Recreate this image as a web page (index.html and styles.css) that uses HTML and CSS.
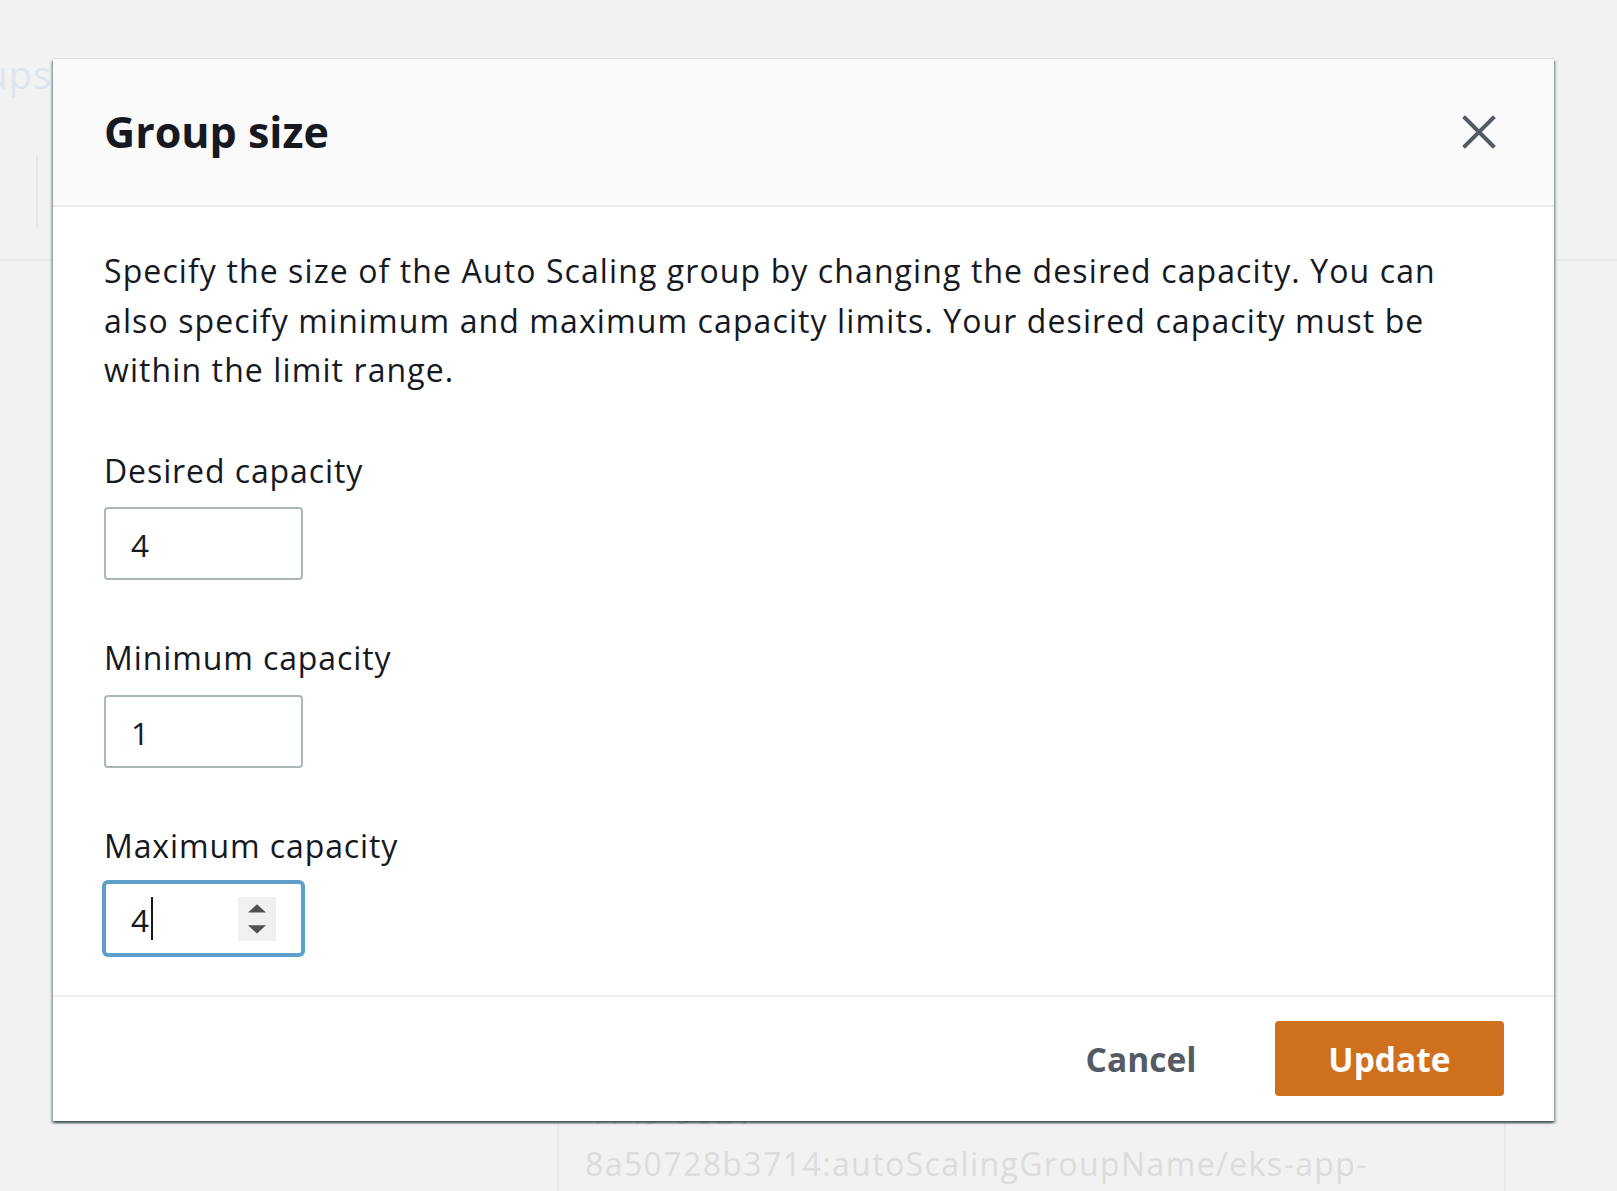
FILE: index.html
```html
<!DOCTYPE html>
<html lang="en">
<head>
<meta charset="utf-8">
<title>Group size</title>
<link rel="stylesheet" href="styles.css">
</head>
<body>
<div class="page">
  <div class="bg-head">
    <div class="bg-title-clip"><span class="bg-title">Auto Scaling groups</span></div>
  </div>
  <div class="bg-toolbar"><div class="bg-sep"></div></div>
  <div class="bg-rule"></div>
  <div class="bg-spacer"></div>
  <div class="bg-row">
    <div class="bg-cell">
      <div class="bg-line">4149-9821</div>
      <div class="bg-line">8a50728b3714:autoScalingGroupName/eks-app-</div>
    </div>
  </div>
</div>

<div class="modal" role="dialog" aria-labelledby="modal-title">
  <div class="modal-header">
    <h2 class="modal-title" id="modal-title">Group size</h2>
    <button class="modal-close" type="button" aria-label="Close">
      <svg width="34" height="34" viewBox="0 0 34 34" aria-hidden="true">
        <path d="M3 3 L31 31 M31 3 L3 31" stroke="#545b64" stroke-width="4" stroke-linecap="square" fill="none"/>
      </svg>
    </button>
  </div>
  <div class="modal-body">
    <p class="modal-desc">Specify the size of the Auto Scaling group by changing the desired capacity. You can also specify minimum and maximum capacity limits. Your desired capacity must be within the limit range.</p>
    <div class="field">
      <label class="field-label" for="desired">Desired capacity</label>
      <input class="field-input" id="desired" type="text" value="4" readonly>
    </div>
    <div class="field">
      <label class="field-label" for="minimum">Minimum capacity</label>
      <input class="field-input" id="minimum" type="text" value="1" readonly>
    </div>
    <div class="field">
      <span class="field-label">Maximum capacity</span>
      <div class="field-input is-focused">
        <span class="field-value">4</span><span class="caret"></span>
        <span class="spinner" aria-hidden="true">
          <svg width="38" height="44" viewBox="0 0 38 44">
            <path d="M10 15.6 L19 7.3 L28 15.6 Z" fill="#505050"/>
            <path d="M10 28.3 L28 28.3 L19 36.6 Z" fill="#505050"/>
          </svg>
        </span>
      </div>
    </div>
  </div>
  <div class="modal-footer">
    <button class="btn btn-link" type="button">Cancel</button>
    <button class="btn btn-primary" type="button">Update</button>
  </div>
</div>
</body>
</html>
```

FILE: styles.css
```css
html, body {
  margin: 0;
  padding: 0;
  height: 1191px;
  overflow: hidden;
}

body {
  background: #f2f2f2;
  font-family: "Open Sans", "Noto Sans", sans-serif;
  color: #16191f;
}

/* ---------- faded page content behind the modal ---------- */
.page {
  width: 100%;
}

.bg-head {
  padding-top: 48px;
  height: 52px;
}

.bg-title-clip {
  width: 52px;
  display: flex;
  justify-content: flex-end;
}

.bg-title {
  flex: none;
  white-space: nowrap;
  font-size: 38px;
  line-height: 52px;
  letter-spacing: 1px;
  color: #dfe5ec;
}

.bg-toolbar {
  margin-top: 55px;
  height: 72px;
}

.bg-sep {
  margin-left: 36px;
  width: 2px;
  height: 100%;
  background: #e6e6e6;
}

.bg-rule {
  margin-top: 32px;
  height: 2px;
  background: #e8e8e8;
}

.bg-spacer {
  height: 799px;
}

.bg-cell {
  box-sizing: border-box;
  margin-left: 557px;
  width: 949px;
  height: 160px;
  padding: 26px 0 0 26px;
  border-left: 2px solid #e9e9e9;
  border-right: 2px solid #e9e9e9;
}

.bg-line {
  font-size: 32px;
  line-height: 52px;
  letter-spacing: 1.4px;
  color: #dcdcdc;
  white-space: nowrap;
}

/* ---------- modal ---------- */
.modal {
  position: absolute;
  left: 53px;
  top: 59px;
  width: 1501px;
  background: #ffffff;
  box-shadow: 0 2px 2px rgba(0, 28, 36, 0.5),
              2px 2px 2px rgba(0, 28, 36, 0.25),
              -2px 2px 2px rgba(0, 28, 36, 0.25),
              0 -1px 1px rgba(0, 28, 36, 0.06);
}

.modal-header {
  height: 146px;
  display: flex;
  align-items: center;
  justify-content: space-between;
  padding: 0 58px 0 51px;
  background: #fafafa;
  border-bottom: 2px solid #eaeded;
}

.modal-title {
  margin: 0;
  font-size: 43px;
  line-height: 54px;
  font-weight: 700;
  color: #16191f;
}

.modal-close {
  width: 34px;
  height: 34px;
  padding: 0;
  border: 0;
  background: none;
  display: flex;
}

.modal-body {
  padding: 39px 100px 40px 51px;
}

.modal-desc {
  margin: 0 0 51px;
  font-size: 32px;
  line-height: 49.5px;
  letter-spacing: 1.1px;
}

.field + .field {
  margin-top: 53px;
}

.field-label {
  display: block;
  margin-bottom: 12px;
  font-size: 32px;
  line-height: 49.5px;
  letter-spacing: 0.9px;
  color: #16191f;
}

.field-input {
  box-sizing: border-box;
  display: block;
  width: 199px;
  height: 73px;
  margin: 0;
  padding: 2px 25px 0;
  border: 2px solid #aab7b8;
  border-radius: 4px;
  background: #ffffff;
  font-family: "Open Sans", "Noto Sans", sans-serif;
  font-size: 31.5px;
  color: #16191f;
  outline: none;
}

.field-input.is-focused {
  display: flex;
  align-items: center;
  padding-top: 0;
  padding-right: 25px;
  border-color: #5f9fcb;
  box-shadow: 0 0 0 2px #5f9fcb;
}

.field-value {
  line-height: 49.5px;
  padding-top: 2px;
}

.caret {
  width: 2px;
  height: 43px;
  margin-left: 2px;
  background: #16191f;
}

.spinner {
  margin-left: auto;
  width: 38px;
  height: 44px;
  background: #f0f0f0;
  display: flex;
}

.modal-footer {
  display: flex;
  justify-content: flex-end;
  align-items: center;
  padding: 24px 50px 25px;
  border-top: 2px solid #eaeded;
}

.btn {
  height: 75px;
  padding: 0;
  border: 0;
  border-radius: 4px;
  font-family: "Open Sans", "Noto Sans", sans-serif;
  font-size: 33.5px;
  font-weight: 700;
  cursor: pointer;
}

.btn-link {
  width: 160px;
  margin-right: 54px;
  background: none;
  color: #545b64;
}

.btn-primary {
  width: 229px;
  background: #cf701d;
  color: #ffffff;
}
```
